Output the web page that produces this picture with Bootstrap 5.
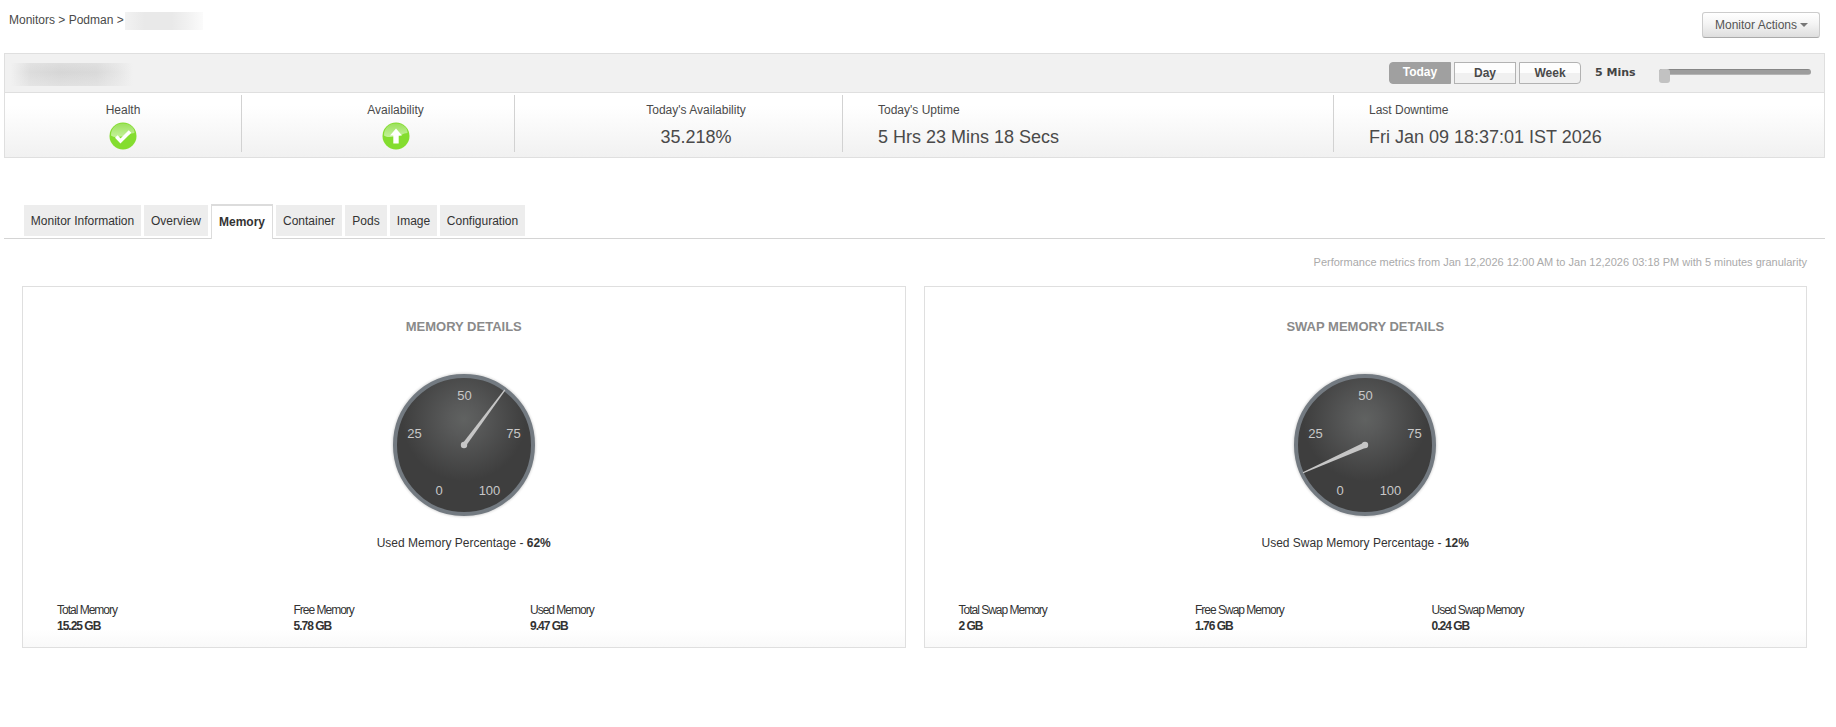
<!DOCTYPE html>
<html lang="en">
<head>
<meta charset="utf-8">
<meta name="viewport" content="width=device-width, initial-scale=1">
<title>Podman monitor - Memory</title>
<link href="https://cdn.jsdelivr.net/npm/bootstrap@5.3.0/dist/css/bootstrap.min.css" rel="stylesheet">
<style>
  body { font: 12px/16px "Liberation Sans", Arial, sans-serif; color: #333; background: #fff; overflow: hidden; }
  .page { margin: 0 11px 0 4px; }
  .topbar { height: 53px; padding: 12px 5px 0 5px; color: #4a4a4a; }
  .crumb { height: 18px; line-height: 17px; }
  .masked-crumb { width: 78px; height: 18px; margin-left: 1px; background: linear-gradient(90deg, #f2f2f2, #e9e9e9 25%, #e9e9e9 60%, #f1f1f1 80%, #fbfbfb); }
  .masked-name { width: 122px; height: 23px; margin-top: 2px; background: linear-gradient(#f1f1f144, #f1f1f100 40%, #f1f1f166), linear-gradient(90deg, #f1f1f1, #dcdcdc 16%, #d6d6d6 40%, #d9d9d9 70%, #e6e6e6 88%, #f1f1f1); }
  .btn-actions { width: 118px; height: 26px; padding: 0 12px; font-size: 12px; line-height: 22px; color: #555; border: 1px solid #ccc; border-bottom-color: #aaa; border-radius: 3px; background: linear-gradient(#fff, #f4f4f4 45%, #dedede); white-space: nowrap; text-align: left; }
  .btn-actions::after { border-top: 4px solid #777; border-left: 4px solid transparent; border-right: 4px solid transparent; margin-left: 3px; vertical-align: 2px; }
  .summary { border: 1px solid #dfdfdf; height: 105px; }
  .summary-head { height: 39px; background: #f1f1f1; border-bottom: 1px solid #dfdfdf; padding: 0 13px 0 6px; }
  .periods { gap: 3px; }
  .period { width: 62px; height: 22px; padding: 0; font-size: 12px; line-height: 19px; font-weight: 700; color: #4a4a4a; border: 1px solid #b2b2b2; border-radius: 0; background: linear-gradient(#fdfdfd 50%, #f0f0f0 50%); }
  .period.active { background: #a0a0a0; color: #fff; border-color: #a0a0a0; border-radius: 4px 0 0 4px; padding-bottom: 2px; }
  .period.end-cap { border-radius: 0 4px 4px 0; }
  .every { font: bold 11px/16px "DejaVu Sans", Verdana, sans-serif; color: #444; width: 64px; margin-left: 14px; }
  .slider { width: 152px; height: 14px; margin-top: 6px; }
  .slider-track { height: 6px; border-radius: 3px; background: linear-gradient(#858585 1px, #9d9d9d 1px, #9d9d9d 5px, #b5b5b5 5px); }
  .slider-knob { left: 0; top: 0; width: 11px; height: 14px; border-radius: 3px; background: #c2c2c2; }
  .summary-body { height: 64px; background: linear-gradient(#fff 20%, #f1f1f1); }
  .cell { height: 57px; margin-top: 2px; border-left: 1px solid #d2d2d2; padding: 7px 0 0 35px; color: #4a4a4a; }
  .cell:first-child { border-left: 0; padding-left: 0; width: 236px; }
  .cell svg { margin-top: 4px; }
  .figure-text { font-size: 18px; line-height: 22px; margin-top: 8px; }
  .tabs { height: 35px; margin-top: 46px; padding-left: 20px; gap: 3px; border-bottom: 1px solid #d4d4d4; }
  .tabs .nav-link { height: 31px; margin-top: 1px; padding: 1px 0 0; line-height: 31px; text-align: center; color: #333; background: #ededed; border-radius: 0; }
  .tabs .nav-link.active { height: 35px; margin-top: 0; padding: 0; line-height: 33px; font-weight: 700; color: #333; background: #fff; border: 1px solid #dcdcdc; border-top-width: 2px; border-bottom: 0; }
  .granularity { font-size: 11px; color: #aaa; margin: 15px 18px 0 0; height: 32px; line-height: 17px; }
  .panels { padding: 0 18px; gap: 18px; }
  .panel { height: 362px; border: 1px solid #dfdfdf; background: linear-gradient(#fff 95%, #f9f9f9); }
  .panel h2 { font-size: 13px; line-height: 16px; font-weight: 700; color: #8a8a8a; margin: 32px 0 35px; }
  .dial { width: 150px; height: 150px; }
  .dial text { font-size: 13px; fill: #c8c8c8; text-anchor: middle; }
  .caption { margin-top: 15px; }
  .stats { margin: 51px 0 0 34px; letter-spacing: -1px; }
  .stat { width: 236.5px; }
</style>
</head>
<body>
<div class="page">
  <header class="topbar d-flex justify-content-between align-items-start">
    <div class="crumb d-flex"><span>Monitors &gt; Podman &gt;</span><span class="masked-crumb"></span></div>
    <button class="btn btn-actions dropdown-toggle" type="button">Monitor Actions</button>
  </header>

  <section class="summary">
    <div class="summary-head d-flex align-items-center">
      <div class="masked-name me-auto"></div>
      <div class="periods d-flex">
        <button class="btn period active">Today</button>
        <button class="btn period">Day</button>
        <button class="btn period end-cap">Week</button>
      </div>
      <span class="every">5 Mins</span>
      <div class="slider position-relative"><div class="slider-track"></div><div class="slider-knob position-absolute"></div></div>
    </div>
    <div class="summary-body d-flex">
      <div class="cell text-center">
        <div>Health</div>
        <svg width="28" height="28" viewBox="0 0 28 28" class="d-block mx-auto">
          <defs>
            <linearGradient id="shine" x1="0" y1="0" x2="0" y2="1"><stop offset="0" stop-color="#9be05c"/><stop offset="1" stop-color="#c4f29a"/></linearGradient>
          </defs>
          <circle cx="14" cy="14" r="13.5" fill="#84dd2f"/>
          <path d="M2 13.5C2 6 7 1.5 14 1.5S26 6 25.500 11C21 11 19 14.500 14 14.500 9 14.500 6 16 2 13.500Z" fill="url(#shine)"/>
          <path d="M7.300 14.500L11.500 19 21 9.500" fill="none" stroke="#fff" stroke-width="3.600"/>
        </svg>
      </div>
      <div class="cell text-center" style="width:273px">
        <div>Availability</div>
        <svg width="28" height="28" viewBox="0 0 28 28" class="d-block mx-auto">
          <circle cx="14" cy="14" r="13.500" fill="#84dd2f"/>
          <path d="M2 13.500C2 6 7 1.500 14 1.500S26 6 25.500 11C21 11 19 14.500 14 14.500 9 14.500 6 16 2 13.500Z" fill="url(#shine)"/>
          <path d="M14 6.500L20 13.500H16.700V21.500H11.300V13.500H8Z" fill="#fff"/>
        </svg>
      </div>
      <div class="cell text-center" style="width:328px"><div>Today's Availability</div><div class="figure-text">35.218%</div></div>
      <div class="cell" style="width:491px"><div>Today's Uptime</div><div class="figure-text">5 Hrs 23 Mins 18 Secs</div></div>
      <div class="cell flex-grow-1"><div>Last Downtime</div><div class="figure-text">Fri Jan 09 18:37:01 IST 2026</div></div>
    </div>
  </section>

  <nav class="tabs nav flex-nowrap">
    <a class="nav-link" style="width:117px">Monitor Information</a>
    <a class="nav-link" style="width:64px">Overview</a>
    <a class="nav-link active" style="width:62px">Memory</a>
    <a class="nav-link" style="width:66px">Container</a>
    <a class="nav-link" style="width:42px">Pods</a>
    <a class="nav-link" style="width:47px">Image</a>
    <a class="nav-link" style="width:85px">Configuration</a>
  </nav>

  <div class="granularity text-end">Performance metrics from Jan 12,2026 12:00 AM to Jan 12,2026 03:18 PM with 5 minutes granularity</div>

  <main class="panels d-flex">
    <section class="panel flex-fill w-50">
      <h2 class="text-center">MEMORY DETAILS</h2>
      <svg class="dial d-block mx-auto" viewBox="-75 -75 150 150">
        <defs>
          <radialGradient id="face" gradientUnits="userSpaceOnUse" cx="0" cy="-26" r="62"><stop offset="0" stop-color="#606261"/><stop offset=".25" stop-color="#595a5a"/><stop offset="1" stop-color="#3e3e3e"/></radialGradient>
          <radialGradient id="halo"><stop offset=".92" stop-color="#999"/><stop offset="1" stop-color="#fff" stop-opacity="0"/></radialGradient>
        </defs>
        <circle r="74.500" fill="url(#halo)"/>
        <circle r="69" fill="url(#face)" stroke="#737a81" stroke-width="4"/>
        <text x="0.500" y="-45.500">50</text><text x="-49.500" y="-7.500">25</text><text x="49.500" y="-7.500">75</text><text x="-25" y="49.500">0</text><text x="25.500" y="49.500">100</text>
        <path d="M-1.700 -1.300L40.400 -55.500 41.400 -54.700 1.700 1.300Z" fill="#c6c6c6"/><circle r="3.200" fill="#c6c6c6"/>
      </svg>
      <div class="caption text-center">Used Memory Percentage - <b>62%</b></div>
      <div class="stats d-flex">
        <div class="stat">Total Memory<br><b>15.25 GB</b></div>
        <div class="stat">Free Memory<br><b>5.78 GB</b></div>
        <div class="stat">Used Memory<br><b>9.47 GB</b></div>
      </div>
    </section>
    <section class="panel flex-fill w-50">
      <h2 class="text-center">SWAP MEMORY DETAILS</h2>
      <svg class="dial d-block mx-auto" viewBox="-75 -75 150 150">
        <circle r="74.500" fill="url(#halo)"/>
        <circle r="69" fill="url(#face)" stroke="#737a81" stroke-width="4"/>
        <text x="0.500" y="-45.500">50</text><text x="-49.500" y="-7.500">25</text><text x="49.500" y="-7.500">75</text><text x="-25" y="49.500">0</text><text x="25.500" y="49.500">100</text>
        <path d="M-.9 -2.500L-62.200 27.200 -61.800 28.200 1.300 2.500Z" fill="#c6c6c6"/><circle r="3.200" fill="#c6c6c6"/>
      </svg>
      <div class="caption text-center">Used Swap Memory Percentage - <b>12%</b></div>
      <div class="stats d-flex">
        <div class="stat">Total Swap Memory<br><b>2 GB</b></div>
        <div class="stat">Free Swap Memory<br><b>1.76 GB</b></div>
        <div class="stat">Used Swap Memory<br><b>0.24 GB</b></div>
      </div>
    </section>
  </main>
</div>
<script src="https://cdn.jsdelivr.net/npm/bootstrap@5.3.0/dist/js/bootstrap.bundle.min.js"></script>
</body>
</html>
